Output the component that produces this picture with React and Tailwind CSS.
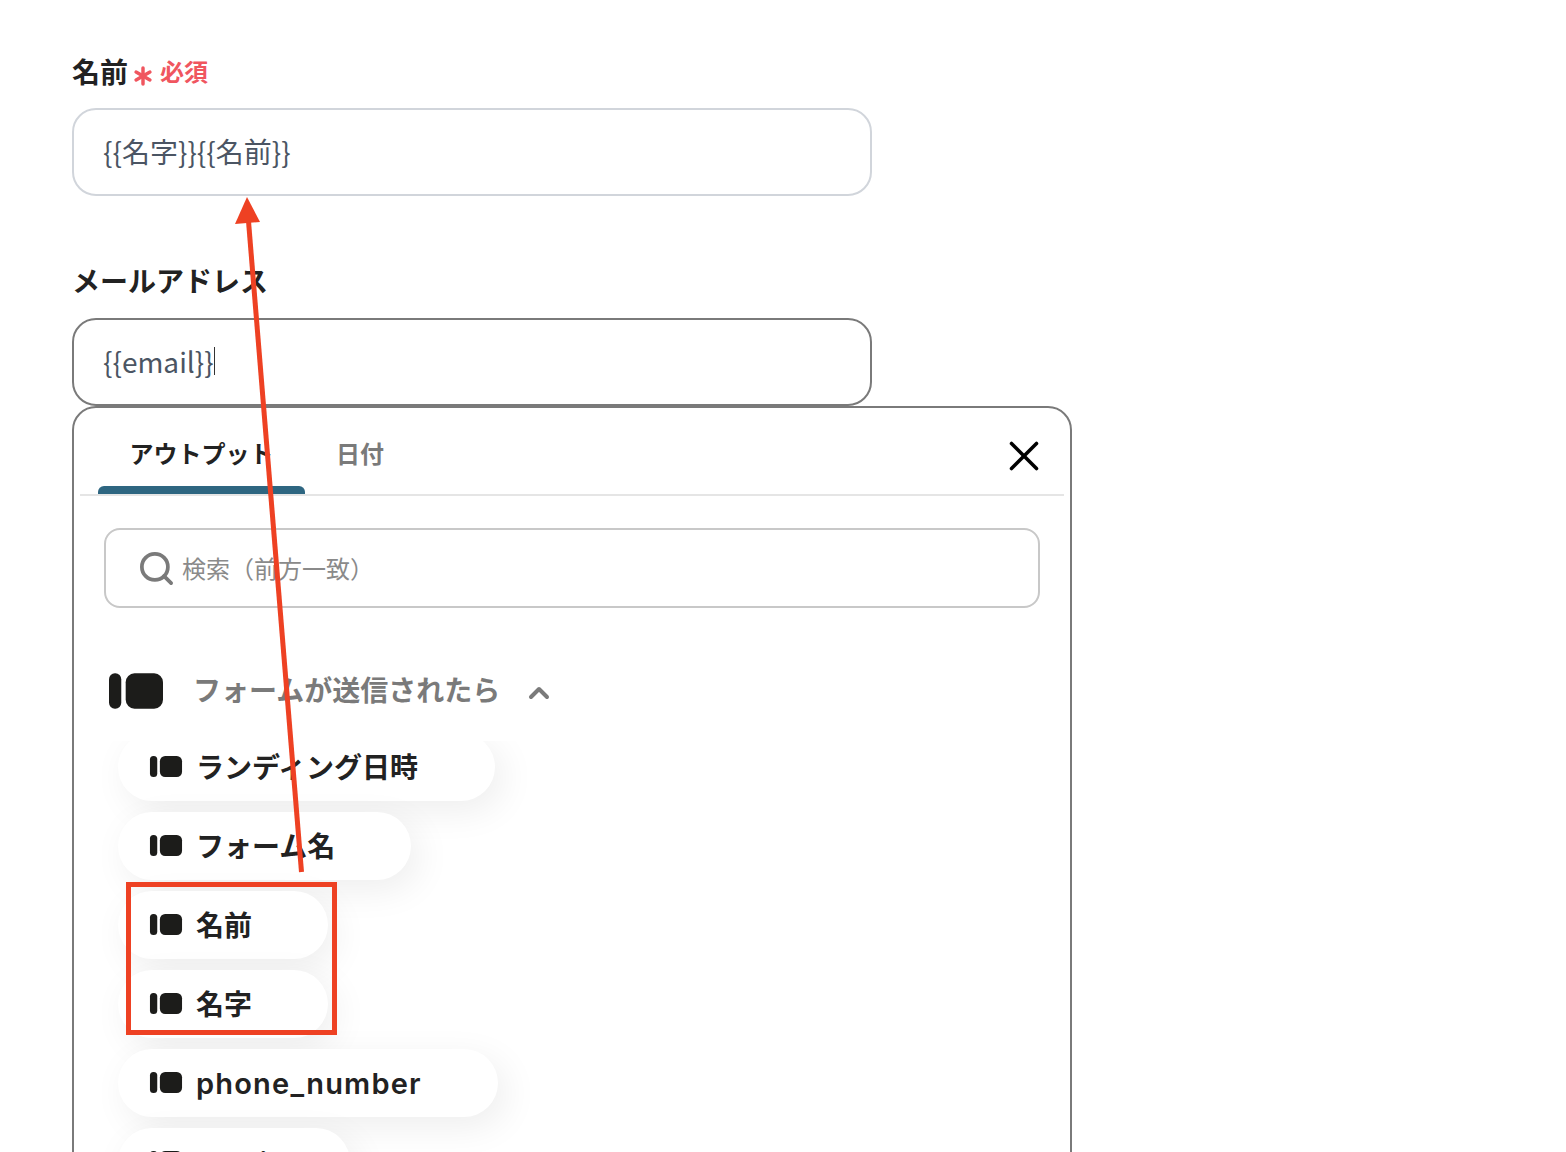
import { X, Search, ChevronUp, Asterisk } from 'lucide-react';

const outputs = [
  { label: 'ランディング日時', width: 'w-[377px]', extra: '-mt-[8px]' },
  { label: 'フォーム名', width: 'w-[293px]' },
  { label: '名前', width: 'w-[210px]' },
  { label: '名字', width: 'w-[210px]' },
  { label: 'phone_number', width: 'w-[380px]', text: 'text-[29px] tracking-[1.2px]' },
  { label: 'email', width: 'w-[232px]', text: 'text-[29px] tracking-[1.2px]' },
];

function FormIcon({ className }) {
  return (
    <svg viewBox="0 0 55 36" className={className} fill="#1c1c1a">
      <rect x="0" y="0" width="12.5" height="36" rx="6" />
      <rect x="17" y="0" width="38" height="36" rx="9" />
    </svg>
  );
}

function App() {
  return (
    <div className="relative h-[1152px] overflow-hidden bg-white pl-[72px] font-['Inter','Noto_Sans_CJK_JP',sans-serif]">
      <div className="flex h-[108px] items-end pb-[17px]">
        <span className="text-[28px] leading-[36px] font-bold text-[#222222]">名前</span>
        <Asterisk className="-mb-[1px] ml-[-1px] h-[32px] w-[32px] self-end text-[#f0565f]" strokeWidth={2.6} />
        <span className="ml-[1px] text-[24px] leading-[36px] font-bold text-[#f0565f]">必須</span>
      </div>
      <div className="flex h-[88px] w-[800px] items-center rounded-[24px] border-2 border-[#d1d5db] pb-[2px] pl-[29px] font-['Noto_Sans_CJK_JP',sans-serif] text-[28px] text-[#4b5563]">
        {'{{名字}}{{名前}}'}
      </div>

      <div className="flex h-[122px] items-end pb-[18px]">
        <span className="text-[28px] leading-[36px] font-bold text-[#222222]">メールアドレス</span>
      </div>
      <div className="flex h-[88px] w-[800px] items-center rounded-[24px] border-2 border-[#7a7a7a] pb-[2px] pl-[29px] font-['Noto_Sans_CJK_JP',sans-serif] text-[28px] text-[#4b5563]">
        {'{{email}}'}
        <span className="h-[28px] w-px bg-[#333333]" />
      </div>

      <div className="h-[800px] w-[1000px] rounded-t-[24px] border-2 border-[#7a7a7a] bg-white px-[6px]">
        <div className="relative flex h-[88px] items-center border-b-2 border-[#e5e5e5] pb-[2px]">
          <div className="relative ml-[18px] flex h-full w-[207px] items-center justify-center pt-[10px]">
            <span className="text-[24px] font-bold text-[#222222]">アウトプット</span>
            <span className="absolute right-0 bottom-[-2px] left-0 h-[8px] rounded-t-[6px] bg-[#2e6681]" />
          </div>
          <span className="mt-[10px] ml-[31px] text-[24px] font-bold text-[#7a7a7a]">日付</span>
          <X className="absolute top-[23px] right-[15px] h-[50px] w-[50px] text-black" strokeWidth={1.7} />
        </div>

        <div className="mt-[32px] ml-[24px] flex h-[80px] w-[936px] items-center rounded-[16px] border-2 border-[#c8c8c8] pl-[31px]">
          <Search className="h-[39px] w-[39px] text-[#7a7a7a]" strokeWidth={2.3} />
          <span className="ml-[6px] pt-[4px] text-[24px] text-[#8a8a8a]">検索（前方一致）</span>
        </div>

        <div className="mt-[65px] ml-[29px] flex h-[36px] items-center">
          <FormIcon className="h-[36px] w-[54px]" />
          <span className="ml-[30px] text-[28px] font-bold text-[#7a7a7a]">フォームが送信されたら</span>
          <ChevronUp className="mt-[4px] ml-[23px] h-[32px] w-[32px] text-[#7a7a7a]" strokeWidth={3} />
        </div>

        <div className="mt-[32px] flex h-[420px] flex-col gap-[11px] overflow-hidden pl-[38px]">
          {outputs.map((item) => (
            <div
              key={item.label}
              className={`flex h-[68px] shrink-0 items-center rounded-full bg-white pl-[31px] shadow-[8px_10px_36px_rgba(0,0,0,0.07)] ${item.width} ${item.extra || ''}`}
            >
              <FormIcon className="mb-[2px] h-[21px] w-[34px]" />
              <span className={`ml-[13px] pt-[2px] font-semibold whitespace-nowrap text-[#222222] ${item.text || 'text-[28px]'}`}>{item.label}</span>
            </div>
          ))}
        </div>
      </div>

      {/* annotation overlay */}
      <div className="absolute top-[882px] left-[126px] h-[153px] w-[211px] border-[5px] border-[#ee4123]" />
      <svg className="absolute top-0 left-0 h-[1152px] w-[1566px]" viewBox="0 0 1566 1152" fill="none">
        <line x1="301.5" y1="872" x2="248" y2="215" stroke="#ee4123" strokeWidth="5" />
        <polygon points="247,197 260,222 235,224" fill="#ee4123" />
      </svg>
    </div>
  );
}

export default App;
